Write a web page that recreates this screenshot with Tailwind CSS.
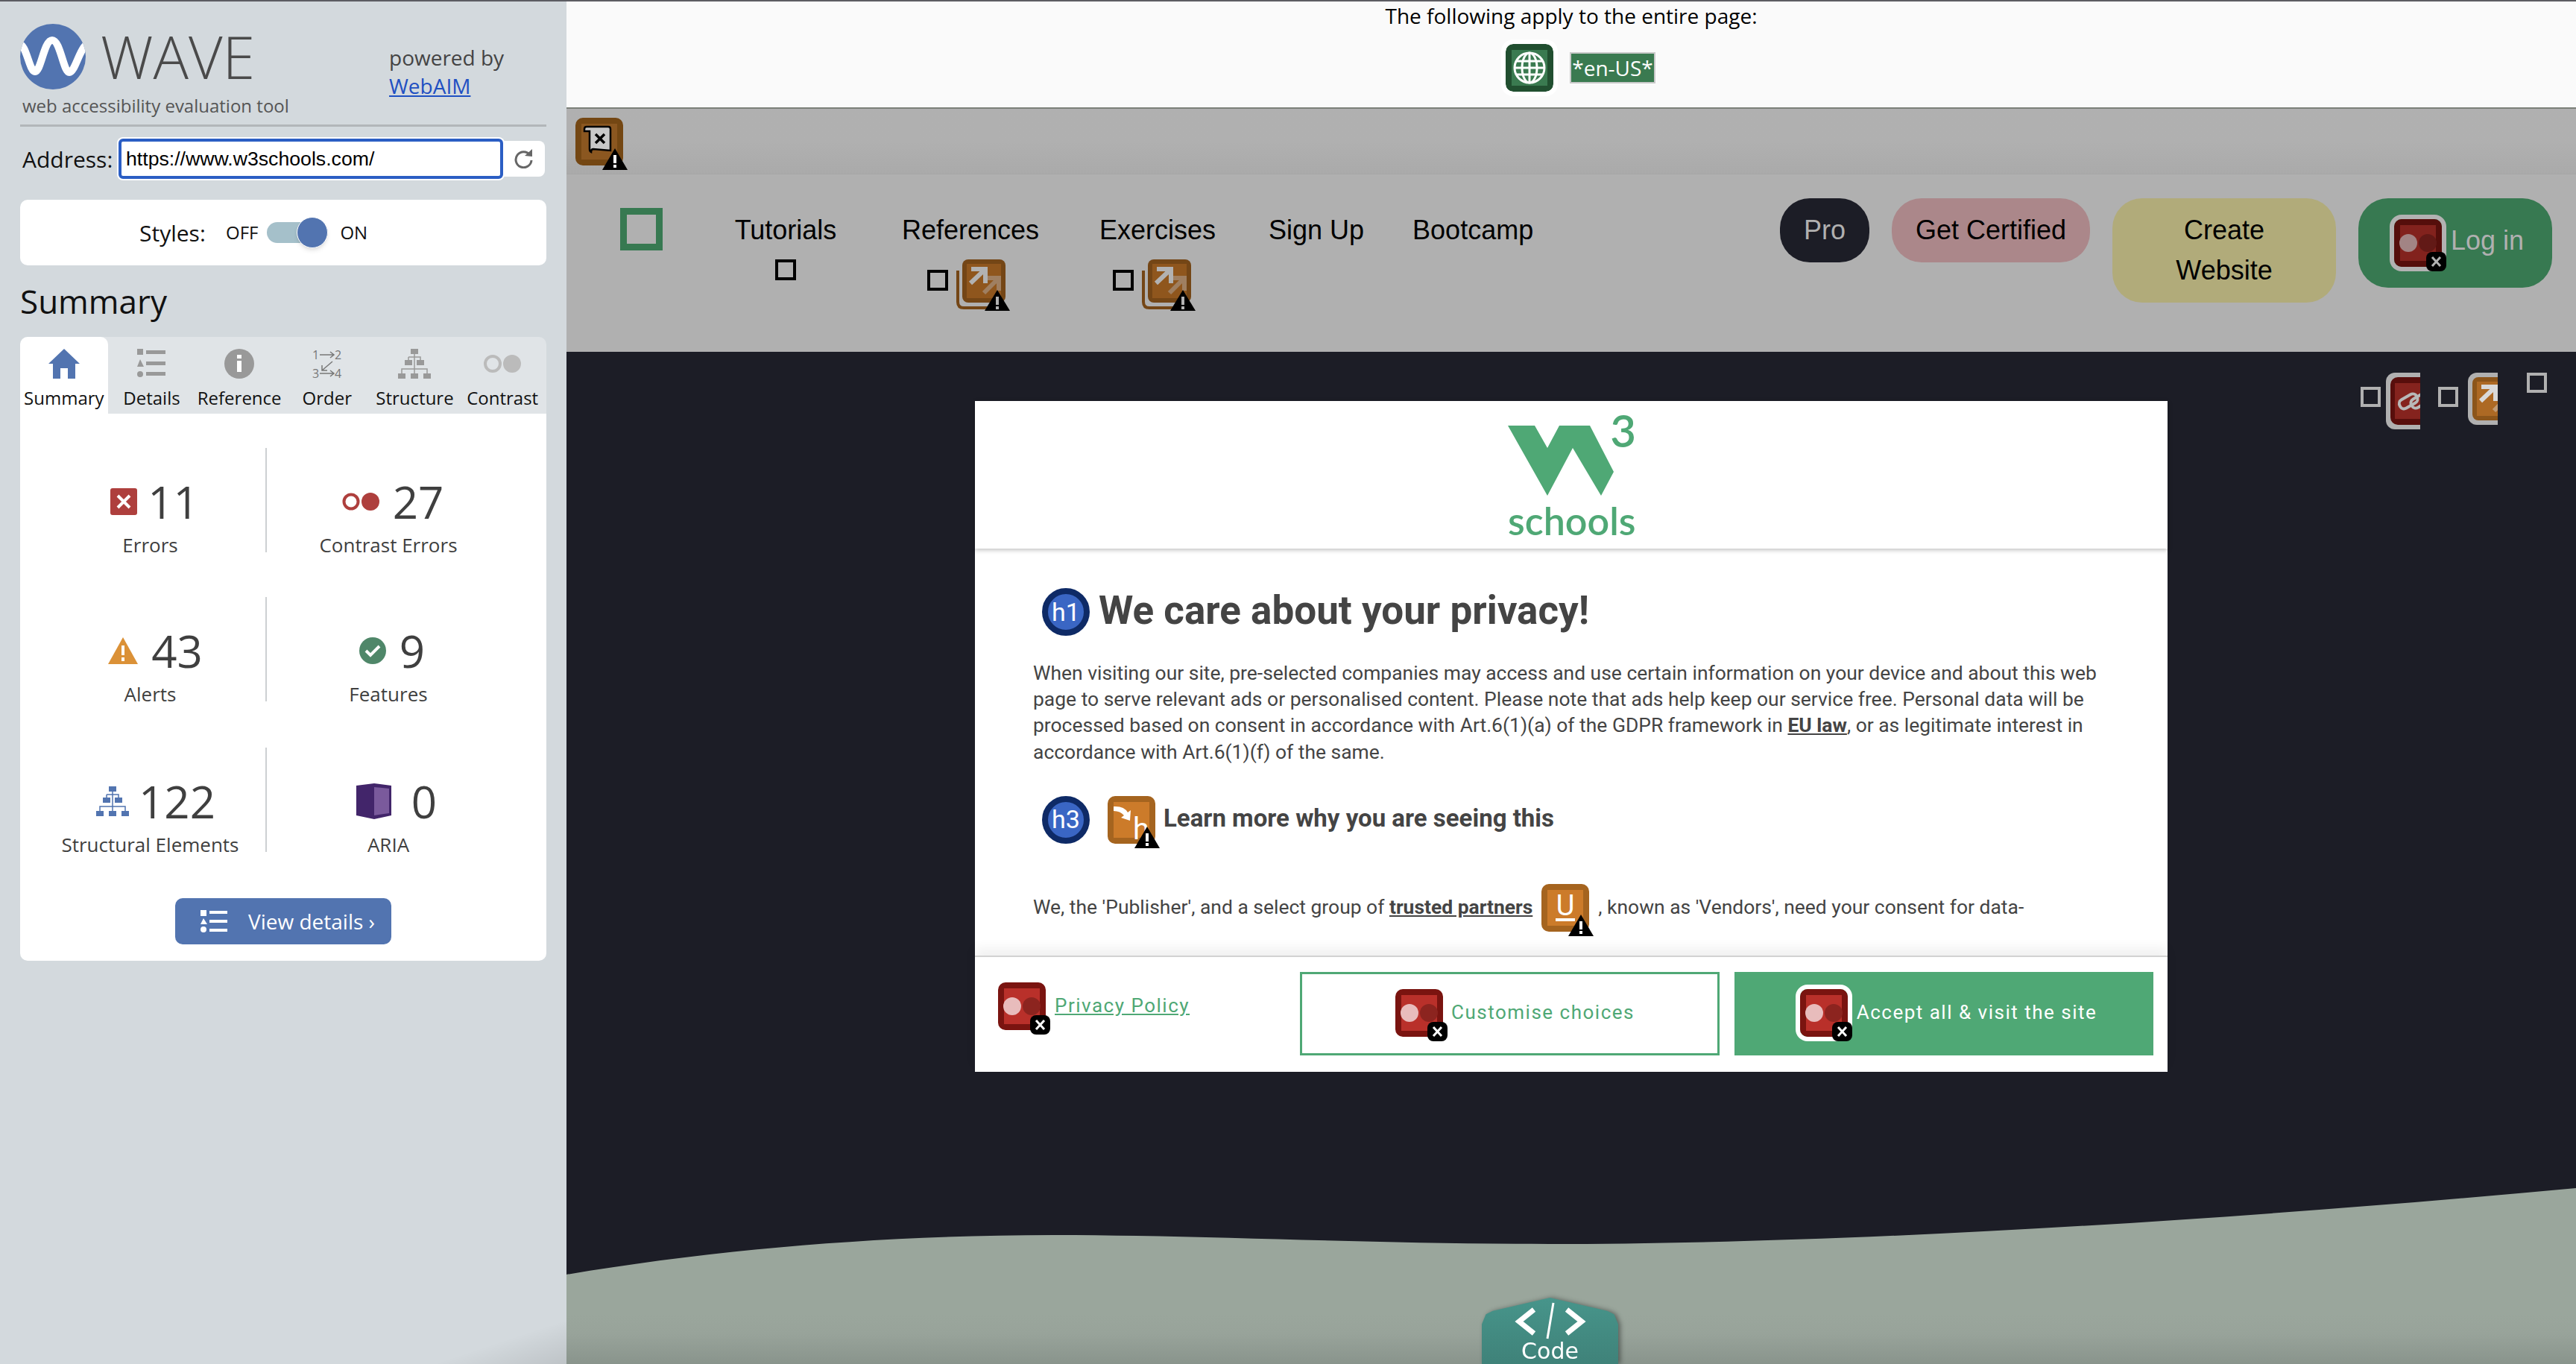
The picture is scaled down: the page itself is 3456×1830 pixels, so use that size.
<!DOCTYPE html>
<html lang="en">
<head>
    <meta charset="UTF-8" />
    <title>WAVE Report of w3schools.com</title>
    <script src="https://cdn.jsdelivr.net/npm/@tailwindcss/browser@4"></script>
</head>
<body class="bg-white">
    <!-- shared WAVE icons -->
    <svg class="hidden" xmlns="http://www.w3.org/2000/svg">
        <defs>
            <g id="warn">
                <path d="M53 41 L70 70 H36 Z" fill="#000"/>
                <rect x="51" y="50" width="4" height="11" fill="#fff"/>
                <rect x="51" y="63" width="4" height="4" fill="#fff"/>
            </g>
            <g id="contrast-err">
                <rect width="64" height="64" rx="10" fill="#7a1410"/>
                <rect x="8" y="8" width="48" height="48" fill="#b9302a"/>
                <circle cx="19" cy="32" r="12" fill="#e8bcbc"/>
                <circle cx="45" cy="32" r="12" fill="#8c241f"/>
                <rect x="43" y="44" width="27" height="26" rx="8" fill="#000"/>
                <path d="M51 51 L62 63 M62 51 L51 63" stroke="#fff" stroke-width="3"/>
            </g>
            <g id="redirect">
                <path d="M-6 15 V57 Q-6 65 2 65 H38" fill="none" stroke="#a5641f" stroke-width="4"/>
                <rect width="58" height="58" rx="8" fill="#a5641f"/>
                <rect x="6" y="6" width="46" height="46" fill="#cc7b2a"/>
                <path d="M12 13 H31 V32 M31 13 L11 32" fill="none" stroke="#fff" stroke-width="6"/>
                <path d="M33 25 H49 V42 M49 25 L29 45" fill="none" stroke="#fff" stroke-opacity=".45" stroke-width="6"/>
            </g>
        </defs>
    </svg>

    <div class="relative flex w-[3456px] h-[1830px] overflow-hidden border-t-2 border-[#5c5c62] font-['Open_Sans',sans-serif]">
        <!-- WAVE sidebar -->
        <aside class="relative w-[760px] shrink-0 h-full bg-[#d3d9dd] px-[27px] pt-[30px] text-[#111]">
            <div class="flex h-[138px] border-b-[3px] border-[#b2b6b9]">
                <div class="w-[495px]">
                    <div class="flex items-center gap-[20px]">
                        <svg class="w-[88px] h-[88px]" viewBox="0 0 88 88">
                            <clipPath id="logo-clip"><circle cx="44" cy="44" r="44"/></clipPath>
                            <circle cx="44" cy="44" r="44" fill="#5274b0"/>
                            <path clip-path="url(#logo-clip)" d="M-2 28 C8 24 12 64 20 64 C28 64 32 22 43 22 C54 22 58 65 66 65 C74 65 80 30 92 26" fill="none" stroke="#fff" stroke-width="10"/>
                        </svg>
                        <span class="text-[79px] leading-[88px] font-light text-[#4a4a4a]">WAVE</span>
                    </div>
                    <div class="mt-[6px] ml-[3px] text-[24px] leading-[32px] text-[#555]">web accessibility evaluation tool</div>
                </div>
                <div class="pt-[26px] text-[28px] leading-[38px] text-[#444]">
                    <div>powered by</div>
                    <a class="text-[#1f50c2] underline">WebAIM</a>
                </div>
            </div>
            <div class="flex items-center mt-[16px] h-[54px]">
                <span class="w-[132px] pl-[3px] text-[30px]">Address:</span>
                <div class="relative z-10 flex items-center w-[516px] h-[54px] pl-[6px] rounded-[6px] bg-white border-[4px] border-[#2b5ec4] ring-2 ring-white font-['Liberation_Sans',sans-serif] text-[26.670px] text-black">https://www.w3schools.com/</div>
                <div class="flex items-center justify-center w-[56px] h-[48px] bg-white rounded-r-[8px]">
                    <svg class="w-[26px] h-[26px]" viewBox="0 0 26 26"><path d="M21 8 A10.500 10.500 0 1 0 23 15" fill="none" stroke="#666" stroke-width="3"/><path d="M14 9 L24 10 L24 0 Z" fill="#666"/></svg>
                </div>
            </div>
            <div class="flex items-center mt-[28px] h-[88px] bg-white rounded-[10px] pl-[160px] text-[24px]">
                <span class="text-[30px] w-[116px]">Styles:</span>
                <span>OFF</span>
                <div class="relative w-[82px] h-[28px] ml-[12px] mr-[16px] rounded-full bg-[#a5c0ca]">
                    <div class="absolute right-0 top-[-7px] w-[42px] h-[42px] rounded-full bg-[#5274b0] border border-white shadow-md"></div>
                </div>
                <span>ON</span>
            </div>
            <h2 class="mt-[18px] text-[44px] leading-[60px]">Summary</h2>
            <!-- tabs -->
            <div class="grid grid-cols-6 mt-[18px] h-[103px] bg-[#e0e4e7] rounded-t-[10px] text-[24px] text-center">
                <div class="bg-white rounded-t-[10px] pt-[16px]">
                    <svg class="mx-auto w-[42px] h-[40px]" viewBox="0 0 42 40"><path d="M21 0 L42 20 H36 V40 H26 V26 H16 V40 H6 V20 H0 Z" fill="#5274b0"/></svg>
                    <div class="mt-[8px]">Summary</div>
                </div>
                <div class="pt-[16px]">
                    <svg class="mx-auto w-[38px] h-[40px]" viewBox="0 0 38 40" fill="#999"><rect width="8" height="8"/><rect x="12" y="2" width="26" height="5"/><path d="M4 14 L9 24 H0 Z"/><rect x="12" y="17" width="26" height="5"/><circle cx="4" cy="34" r="4"/><rect x="12" y="31" width="26" height="5"/></svg>
                    <div class="mt-[8px]">Details</div>
                </div>
                <div class="pt-[16px]">
                    <svg class="mx-auto w-[40px] h-[40px]" viewBox="0 0 40 40"><circle cx="20" cy="20" r="20" fill="#999"/><rect x="17" y="16" width="6" height="15" fill="#fff"/><rect x="17" y="8" width="6" height="5" fill="#fff"/></svg>
                    <div class="mt-[8px]">Reference</div>
                </div>
                <div class="pt-[16px]">
                    <svg class="mx-auto w-[40px] h-[40px]" viewBox="0 0 40 40" fill="#777" font-family="Open Sans" font-size="16">
                        <text x="0" y="14">1</text><text x="30" y="14">2</text><text x="0" y="39">3</text><text x="30" y="39">4</text>
                        <path d="M10 8 H28 M24 4 L29 8 L24 12 M10 33 H28 M24 29 L29 33 L24 37 M27 17 L13 29 M13 22 V29 H20" fill="none" stroke="#777" stroke-width="1.500"/>
                    </svg>
                    <div class="mt-[8px]">Order</div>
                </div>
                <div class="pt-[16px]">
                    <svg class="mx-auto w-[44px] h-[40px]" viewBox="0 0 44 40" fill="#999"><rect x="17" y="0" width="10" height="7"/><rect x="9" y="15" width="10" height="7"/><rect x="25" y="15" width="10" height="7"/><rect x="0" y="33" width="10" height="7"/><rect x="17" y="33" width="10" height="7"/><rect x="34" y="33" width="10" height="7"/><path d="M22 7 V33 M14 11 H30 V15 M14 11 V15 M5 33 V27 H39 V33" fill="none" stroke="#999" stroke-width="1.500"/></svg>
                    <div class="mt-[8px]">Structure</div>
                </div>
                <div class="pt-[16px]">
                    <svg class="mx-auto w-[50px] h-[40px]" viewBox="0 0 50 40"><circle cx="12" cy="20" r="10" fill="none" stroke="#bbb" stroke-width="4"/><circle cx="38" cy="20" r="12" fill="#bbb"/></svg>
                    <div class="mt-[8px]">Contrast</div>
                </div>
            </div>
            <!-- counts -->
            <div class="h-[734px] bg-white rounded-b-[10px] pt-[46px] text-[#3f3f3f]">
                <div class="grid grid-cols-[331px_326px] grid-rows-[200px_202px_190px] h-[592px]">
                    <div class="h-[140px] pl-[20px] border-r-2 border-[#cdd0d2] text-center">
                        <div class="flex items-center justify-center gap-[14px] h-[116px] pt-[28px] pl-[12px]">
                            <svg class="w-[36px] h-[36px]" viewBox="0 0 36 36"><rect width="36" height="36" rx="3" fill="#ae3f3d"/><path d="M10 10 L26 26 M26 10 L10 26" stroke="#fff" stroke-width="4"/></svg>
                            <span class="text-[60px] leading-[88px]">11</span>
                        </div>
                        <div class="text-[26px] leading-[36px] mt-[-4px]">Errors</div>
                    </div>
                    <div class="h-[140px] text-center">
                        <div class="flex items-center justify-center gap-[18px] h-[116px] pt-[28px] pl-[12px]">
                            <svg class="w-[50px] h-[26px]" viewBox="0 0 50 26"><circle cx="12" cy="13" r="9.500" fill="none" stroke="#ae3f3d" stroke-width="4"/><circle cx="38" cy="13" r="12" fill="#ae3f3d"/></svg>
                            <span class="text-[60px] leading-[88px]">27</span>
                        </div>
                        <div class="text-[26px] leading-[36px] mt-[-4px]">Contrast Errors</div>
                    </div>
                    <div class="h-[140px] pl-[20px] border-r-2 border-[#cdd0d2] text-center">
                        <div class="flex items-center justify-center gap-[18px] h-[116px] pt-[28px] pl-[14px]">
                            <svg class="w-[40px] h-[36px]" viewBox="0 0 40 36"><path d="M20 0 L40 36 H0 Z" fill="#db9137"/><rect x="18" y="11" width="4" height="13" fill="#fff"/><rect x="18" y="27" width="4" height="5" fill="#fff"/></svg>
                            <span class="text-[60px] leading-[88px]">43</span>
                        </div>
                        <div class="text-[26px] leading-[36px] mt-[-4px]">Alerts</div>
                    </div>
                    <div class="h-[140px] text-center">
                        <div class="flex items-center justify-center gap-[18px] h-[116px] pt-[28px] pl-[10px]">
                            <svg class="w-[36px] h-[36px]" viewBox="0 0 36 36"><circle cx="18" cy="18" r="18" fill="#4f8769"/><path d="M9 18 L15 24 L27 12" fill="none" stroke="#fff" stroke-width="4"/></svg>
                            <span class="text-[60px] leading-[88px]">9</span>
                        </div>
                        <div class="text-[26px] leading-[36px] mt-[-4px]">Features</div>
                    </div>
                    <div class="h-[140px] pl-[20px] border-r-2 border-[#cdd0d2] text-center">
                        <div class="flex items-center justify-center gap-[13px] h-[116px] pt-[28px] pl-[15px]">
                            <svg class="w-[44px] h-[40px]" viewBox="0 0 44 40" fill="#5274b0"><rect x="17" y="0" width="10" height="7"/><rect x="9" y="15" width="10" height="7"/><rect x="25" y="15" width="10" height="7"/><rect x="0" y="33" width="10" height="7"/><rect x="17" y="33" width="10" height="7"/><rect x="34" y="33" width="10" height="7"/><path d="M22 7 V33 M14 11 H30 V15 M14 11 V15 M5 33 V27 H39 V33" fill="none" stroke="#5274b0" stroke-width="1.500"/></svg>
                            <span class="text-[60px] leading-[88px]">122</span>
                        </div>
                        <div class="text-[26px] leading-[36px] mt-[-4px]">Structural Elements</div>
                    </div>
                    <div class="h-[140px] text-center">
                        <div class="flex items-center justify-center gap-[26px] h-[116px] pt-[28px] pl-[22px]">
                            <svg class="w-[48px] h-[48px]" viewBox="0 0 48 48"><path d="M0 3 L24 0 L47 3 V43 L24 48 L0 43 Z" fill="#42256a"/><path d="M24 5 L44 7 V40 L24 43 Z" fill="#7a5a9c"/></svg>
                            <span class="text-[60px] leading-[88px]">0</span>
                        </div>
                        <div class="text-[26px] leading-[36px] mt-[-4px]">ARIA</div>
                    </div>
                </div>
                <div class="flex items-center w-[290px] h-[62px] ml-[208px] mt-[12px] pl-[34px] rounded-[10px] bg-[#5274b0] text-white text-[28px]">
                    <svg class="w-[36px] h-[30px] mr-[28px]" viewBox="0 0 36 30" fill="#fff"><rect width="8" height="8"/><rect x="12" y="1" width="24" height="4"/><path d="M4 11 L9 19 H0 Z"/><rect x="12" y="13" width="24" height="4"/><circle cx="4" cy="26" r="4"/><rect x="12" y="25" width="24" height="4"/></svg>
                    <span>View details ›</span>
                </div>
            </div>
            <div class="absolute bottom-0 right-0 w-[180px] h-[60px] bg-gradient-to-br from-transparent via-transparent to-black/10"></div>
        </aside>

        <!-- reviewed page -->
        <main class="relative flex-1 flex flex-col bg-[#b0b0b0] font-['Liberation_Sans',sans-serif]">
            <div class="h-[144px] shrink-0 bg-[#fafafa] border-b-2 border-[#7b8079] text-center font-['Open_Sans',sans-serif] text-[28px] text-black">
                <div class="leading-[38px]">The following apply to the entire page:</div>
                <div class="flex items-center justify-center gap-[22px] mt-[19px] pl-[25px]">
                    <svg class="w-[64px] h-[64px] rounded-[10px] ring-[6px] ring-white" viewBox="0 0 64 64">
                        <rect width="64" height="64" rx="10" fill="#214f30"/>
                        <rect x="8" y="8" width="48" height="48" fill="#3a7a50"/>
                        <g fill="none" stroke="#fff" stroke-width="3"><circle cx="32" cy="32" r="20"/><ellipse cx="32" cy="32" rx="10" ry="20"/><path d="M32 12 V52 M12 32 H52 M15 23 H49 M15 41 H49"/></g>
                    </svg>
                    <span class="px-px h-[42px] leading-[38px] bg-[#3a7a50] border-2 border-[#c9c9c9] text-white">*en-US*</span>
                </div>
            </div>

            <div class="relative h-[88px] shrink-0 border-b border-[#a6a6a6] bg-gradient-to-b from-[#b0b0b0] via-[#b0b0b0] to-[#aaaaaa] pl-[12px] pt-[12px]">
                <svg class="w-[64px] h-[64px] overflow-visible" viewBox="0 0 64 64">
                    <rect width="64" height="64" rx="10" fill="#744713"/>
                    <rect x="8" y="8" width="48" height="48" fill="#8b5720"/>
                    <path d="M15 12 H44 Q47 12 47 15 V44 L24 42 Q21 42 21 46 Q19 45 19 42 V18 H12 V15 Q12 12 15 12 Z" fill="#c8c8c8" stroke="#000" stroke-width="2.500"/>
                    <path d="M27 22 L39 34 M39 22 L27 34" stroke="#000" stroke-width="3.500"/>
                    <use href="#warn"/>
                </svg>
            </div>

            <nav class="relative h-[238px] shrink-0 flex items-start pt-[44px] text-[36px] text-black">
                <div class="w-[57px] h-[57px] ml-[72px] mt-[1px] border-[9px] border-[#377951]"></div>
                <div class="w-[196px] ml-[67px] text-center">
                    <div class="pt-[10px] leading-[42px]">Tutorials</div>
                    <div class="w-[28px] h-[28px] mx-auto mt-[18px] border-[4px] border-black"></div>
                </div>
                <div class="w-[190px] ml-[55px] text-center">
                    <div class="pt-[10px] leading-[42px]">References</div>
                    <div class="flex items-start ml-[37px] mt-[18px]">
                        <div class="w-[28px] h-[28px] mt-[14px] border-[4px] border-black"></div>
                        <svg class="w-[58px] h-[58px] ml-[19px] overflow-visible brightness-[.7]" viewBox="0 0 58 58"><use href="#redirect"/><path d="M47 41 L64 69 H30 Z" fill="#000"/><rect x="45" y="50" width="4" height="11" fill="#fff"/><rect x="45" y="63" width="4" height="4" fill="#fff"/></svg>
                    </div>
                </div>
                <div class="w-[160px] ml-[76px] text-center">
                    <div class="pt-[10px] leading-[42px]">Exercises</div>
                    <div class="flex items-start ml-[20px] mt-[18px]">
                        <div class="w-[28px] h-[28px] mt-[14px] border-[4px] border-black"></div>
                        <svg class="w-[58px] h-[58px] ml-[19px] overflow-visible brightness-[.7]" viewBox="0 0 58 58"><use href="#redirect"/><path d="M47 41 L64 69 H30 Z" fill="#000"/><rect x="45" y="50" width="4" height="11" fill="#fff"/><rect x="45" y="63" width="4" height="4" fill="#fff"/></svg>
                    </div>
                </div>
                <div class="ml-[69px] pt-[10px] leading-[42px]">Sign Up</div>
                <div class="ml-[65px] pt-[10px] leading-[42px]">Bootcamp</div>
                <div class="ml-auto mr-[32px] mt-[-12px] flex items-start gap-[30px]">
                    <div class="flex items-center justify-center w-[120px] h-[86px] rounded-[40px] bg-[#1c1d26] text-[#b0b0b0]">Pro</div>
                    <div class="flex items-center justify-center w-[266px] h-[86px] rounded-[40px] bg-[#ab878a]">Get Certified</div>
                    <div class="flex items-center justify-center w-[300px] h-[140px] rounded-[40px] bg-[#b1ab7a] text-center leading-[54px]">Create<br>Website</div>
                    <div class="flex items-center w-[260px] h-[120px] pl-[48px] rounded-[40px] bg-[#377951] text-[#b0b0b0]">
                        <svg class="w-[64px] h-[64px] overflow-visible brightness-[.7] rounded-[10px] ring-[6px] ring-white" viewBox="0 0 64 64"><use href="#contrast-err"/></svg>
                        <span class="ml-[12px] mt-[-6px]">Log in</span>
                    </div>
                </div>
            </nav>

            <section class="relative flex-1 bg-[#1c1d26] overflow-hidden">
                <svg class="absolute left-0 bottom-0 w-[2696px] h-[240px]" viewBox="0 0 2696 240" preserveAspectRatio="none">
                    <defs>
                        <linearGradient id="wave-fill" x1="0" y1="0" x2="0" y2="1">
                            <stop offset="0.720" stop-color="#9aa69c"/>
                            <stop offset="0.830" stop-color="#98a39a"/>
                            <stop offset="1" stop-color="#89948c"/>
                        </linearGradient>
                    </defs>
                    <path d="M0 120 C180 90 400 67 654 67 C850 67 1080 79 1318 79 C1700 79 2200 50 2696 4 V240 H0 Z" fill="url(#wave-fill)"/>
                </svg>

                <!-- code tab at the page bottom -->
                <div class="absolute bottom-0 left-[1228px] drop-shadow-[3px_0_3px_rgba(0,0,0,0.4)]">
                    <div class="relative w-[183px] h-[89px] bg-gradient-to-b from-[#47958b] to-[#3f8279] text-center text-white [clip-path:polygon(50%_0,92%_20%,97%_25%,100%_40%,100%_100%,0_100%,0_40%,3%_25%,8%_20%)]">
                        <svg class="absolute left-[42px] top-[6px] w-[100px] h-[50px]" viewBox="0 0 100 50" fill="none" stroke="#fff" stroke-width="7"><path d="M28 10 L8 26 L28 42 M72 10 L92 26 L72 42"/><path d="M54 1 L46 49" stroke-width="3"/></svg>
                        <div class="absolute inset-x-0 top-[54px] font-['DejaVu_Sans',sans-serif] text-[30px] leading-[36px]">Code</div>
                    </div>
                </div>

                <!-- clipped WAVE icons at the right edge -->
                <div class="absolute left-[2407px] top-[47px] w-[27px] h-[27px] border-[4px] border-[#b0b0b0]"></div>
                <div class="absolute left-[2441px] top-[28px] w-[46px] h-[78px] overflow-hidden">
                    <div class="w-[76px] h-[76px] p-[6px] rounded-[12px] bg-[#b0b0b0]">
                        <svg class="w-[64px] h-[64px] brightness-[.72]" viewBox="0 0 64 64">
                            <rect width="64" height="64" rx="10" fill="#7a1410"/>
                            <rect x="6" y="8" width="52" height="48" fill="#b9302a"/>
                            <g fill="none" stroke="#fff" stroke-width="4" transform="rotate(-30 32 32)"><rect x="12" y="22" width="26" height="13" rx="6"/><rect x="26" y="29" width="26" height="13" rx="6"/></g>
                        </svg>
                    </div>
                </div>
                <div class="absolute left-[2511px] top-[47px] w-[27px] h-[27px] border-[4px] border-[#b0b0b0]"></div>
                <div class="absolute left-[2545px] top-[28px] w-[46px] h-[78px] overflow-hidden">
                    <div class="w-[70px] h-[70px] ml-[6px] p-[6px] rounded-[12px] bg-[#b0b0b0]">
                        <svg class="w-[58px] h-[58px] brightness-[.85]" viewBox="0 0 58 58"><use href="#redirect"/></svg>
                    </div>
                </div>
                <div class="absolute left-[2630px] top-[28px] w-[27px] h-[27px] border-[4px] border-[#b0b0b0]"></div>

                <!-- consent dialog -->
                <div class="relative w-[1600px] h-[900px] mx-auto mt-[66px] flex flex-col bg-white font-['Roboto',sans-serif] text-[#444]">
                    <div class="flex justify-center h-[198px] shrink-0 shadow-[0_2px_6px_rgba(0,0,0,0.25)] z-10">
                        <div class="relative w-[170px] text-[#4fa875]">
                            <svg class="absolute left-0 top-[33px] w-[142px] h-[94px]" viewBox="0 0 142 94"><path d="M0 0 H36 L53 30 L69 0 H110 L142 62 L125 94 L87 30 L53 94 Z" fill="#4fa875"/></svg>
                            <span class="absolute right-[-2px] top-[8px] font-['Lato',sans-serif] font-semibold text-[60px] leading-[62px]">3</span>
                            <span class="absolute left-0 top-[132px] font-['Lato',sans-serif] font-semibold text-[52px] leading-[56px]">schools</span>
                        </div>
                    </div>
                    <div class="flex-1 overflow-hidden pl-[78px] pr-[90px] pt-[53px]">
                        <div class="flex items-center h-[64px] ml-[12px] gap-[12px]">
                            <div class="flex items-center justify-center w-16 h-16 rounded-full bg-[#3a66c4] border-[8px] border-[#0e2a66] text-white text-[34px]">h1</div>
                            <h1 class="text-[53px] font-bold leading-[64px] mt-[-4px]">We care about your privacy!</h1>
                        </div>
                        <p class="mt-[32px] text-[26.450px] leading-[35.200px]">When visiting our site, pre-selected companies may access and use certain information on your device and about this web page to serve relevant ads or personalised content. Please note that ads help keep our service free. Personal data will be processed based on consent in accordance with Art.6(1)(a) of the GDPR framework in <b class="underline">EU law</b>, or as legitimate interest in accordance with Art.6(1)(f) of the same.</p>
                        <div class="flex items-center h-[64px] mt-[42px] ml-[12px]">
                            <div class="flex items-center justify-center w-16 h-16 rounded-full bg-[#3a66c4] border-[8px] border-[#0e2a66] text-white text-[34px]">h3</div>
                            <svg class="ml-[24px] w-16 h-16 overflow-visible" viewBox="0 0 64 64"><rect width="64" height="64" rx="10" fill="#a5641f"/><rect x="8" y="8" width="48" height="48" fill="#cc7b2a"/><path d="M8 14 Q22 13 27 22 L31 19 L30 33 L18 29 L22 26 Q17 20 8 20 Z" fill="#fff"/><text x="34" y="58" fill="#fff" font-family="Roboto" font-size="40">h</text><use href="#warn"/></svg>
                            <h3 class="ml-[11px] text-[33px] font-bold leading-[40px] mt-[-4px]">Learn more why you are seeing this</h3>
                        </div>
                        <div class="flex items-start mt-[54px] text-[26.450px] leading-[35.200px] whitespace-nowrap">
                            <span class="mt-[13px]">We, the 'Publisher', and a select group of <b class="underline">trusted partners</b></span>
                            <svg class="ml-[12px] w-16 h-16 shrink-0 overflow-visible" viewBox="0 0 64 64"><rect width="64" height="64" rx="10" fill="#a5641f"/><rect x="8" y="8" width="48" height="48" fill="#cc7b2a"/><text x="32" y="42" fill="#fff" text-anchor="middle" font-family="Roboto" font-size="38">U</text><rect x="19" y="46" width="26" height="4" fill="#fff"/><use href="#warn"/></svg>
                            <span class="ml-[12px] mt-[13px]">, known as 'Vendors', need your consent for data-</span>
                        </div>
                    </div>
                    <div class="flex h-[156px] shrink-0 border-t-2 border-[#d2d2d2] shadow-[0_-10px_14px_rgba(0,0,0,0.06)] bg-white tracking-[1.500px] text-[26px]">
                        <div class="flex items-start w-[436px] pl-[31px] pt-[34px]">
                            <svg class="w-16 h-16 overflow-visible" viewBox="0 0 64 64"><use href="#contrast-err"/></svg>
                            <a class="ml-[12px] mt-[12px] text-[#4fa875] underline">Privacy Policy</a>
                        </div>
                        <div class="flex items-center justify-center w-[563px] h-[112px] mt-[20px] pl-[14px] pb-[3px] border-[3px] border-[#4fa875] text-[#4fa875]">
                            <svg class="w-16 h-16 mr-[11px] overflow-visible" viewBox="0 0 64 64"><use href="#contrast-err"/></svg>
                            <span>Customise choices</span>
                        </div>
                        <div class="flex items-center justify-center w-[562px] h-[112px] mt-[20px] ml-[20px] pl-[12px] pb-[3px] bg-[#4fa875] text-white">
                            <svg class="w-16 h-16 mr-[12px] rounded-[10px] ring-[6px] ring-white overflow-visible" viewBox="0 0 64 64"><use href="#contrast-err"/></svg>
                            <span>Accept all &amp; visit the site</span>
                        </div>
                    </div>
                </div>
            </section>
        </main>
    </div>
</body>
</html>
